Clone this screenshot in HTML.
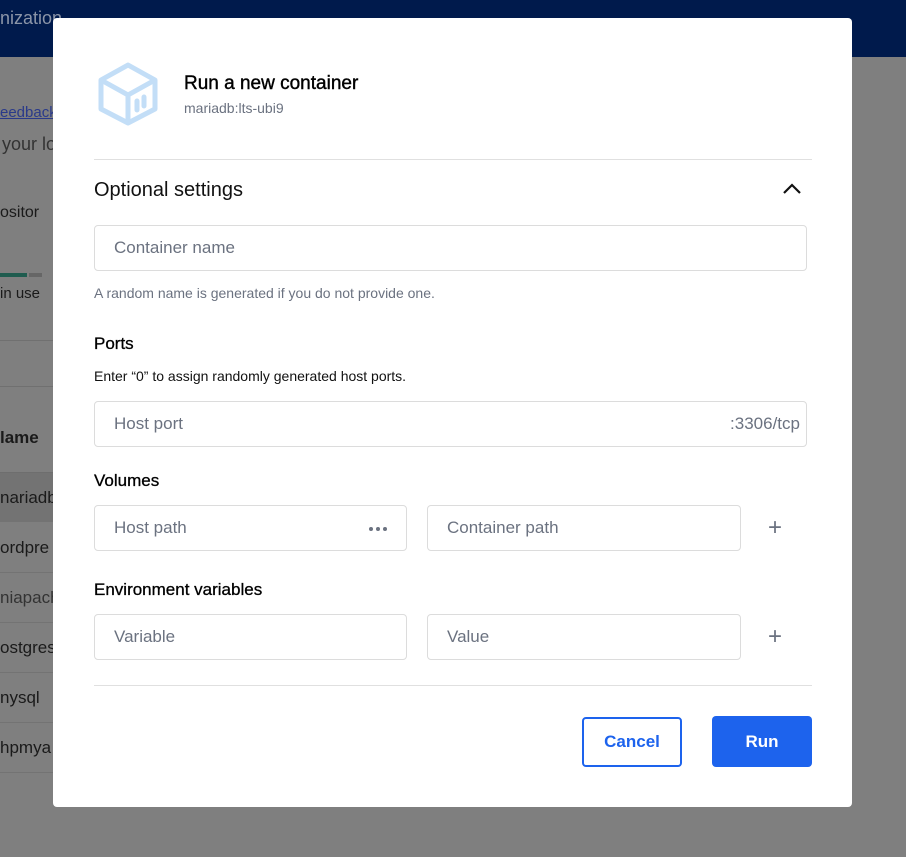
<!DOCTYPE html>
<html><head><meta charset="utf-8"><style>
*{box-sizing:border-box;margin:0;padding:0}
body{width:906px;height:857px;overflow:hidden;font-family:"Liberation Sans",Roboto,sans-serif;background:#7f7f7f;position:relative}
.bg{position:absolute;color:#1a1a1a}
.top{position:absolute;left:0;top:0;width:906px;height:57px;background:#001a4c}
.modal{position:absolute;left:53px;top:18px;width:799px;height:789px;background:#fff;border-radius:4px}
.a{position:absolute}
.inp{position:absolute;border:1px solid #dcdcdc;border-radius:4px;height:46px;font-size:17px;color:#6b7280;padding:12px 19px;line-height:20px}
.lbl{position:absolute;font-size:17px;color:#000;-webkit-text-stroke:0.3px #000}
.plus{position:absolute;font-size:24px;color:#6b7280;line-height:24px}
.dot{position:absolute;width:4px;height:4px;border-radius:2px;background:#6b7280;top:21px}
</style></head><body>
<div class="top"><span class="a" style="left:0;top:8px;color:#8b95a8;font-size:18px">nization</span></div>
<div class="bg" style="left:0;top:104px;font-size:15px;color:#2a3a8a;text-decoration:underline">eedback</div>
<div class="bg" style="left:2px;top:134px;font-size:18px;color:#333">your lo</div>
<div class="bg" style="left:0;top:204px;font-size:16px">ositor</div>
<div class="a" style="left:0;top:273px;width:27px;height:4px;background:#1f5c4f"></div>
<div class="a" style="left:29px;top:273px;width:13px;height:4px;background:#666"></div>
<div class="bg" style="left:0;top:285px;font-size:15px">in use</div>
<div class="a" style="left:0;top:340px;width:53px;height:1px;background:#707070"></div>
<div class="a" style="left:0;top:386px;width:53px;height:1px;background:#707070"></div>
<div class="bg" style="left:0;top:428px;font-size:17px;font-weight:bold">lame</div>
<div class="a" style="left:0;top:472px;width:53px;height:50px;background:#737373;border-top:1px solid #6e6e6e"></div>
<div class="bg" style="left:0;top:488px;font-size:17px">nariadb</div>
<div class="a" style="left:0;top:572px;width:53px;height:1px;background:#737373"></div>
<div class="a" style="left:0;top:622px;width:53px;height:1px;background:#737373"></div>
<div class="a" style="left:0;top:672px;width:53px;height:1px;background:#737373"></div>
<div class="a" style="left:0;top:722px;width:53px;height:1px;background:#737373"></div>
<div class="a" style="left:0;top:772px;width:53px;height:1px;background:#737373"></div>
<div class="bg" style="left:0;top:538px;font-size:17px">ordpre</div>
<div class="bg" style="left:0;top:588px;font-size:17px;color:#333">niapach</div>
<div class="bg" style="left:0;top:638px;font-size:17px">ostgres</div>
<div class="bg" style="left:0;top:688px;font-size:17px">nysql</div>
<div class="bg" style="left:0;top:738px;font-size:17px">hpmya</div>

<div class="modal">
<svg class="a" style="left:44px;top:44px" width="62" height="64" viewBox="0 0 62 64" fill="none" stroke="#c3def7" stroke-width="5" stroke-linejoin="round">
<path d="M31 3 L58 18 L58 47 L31 61 L4 47 L4 18 Z"/><path d="M4 18 L31 33 L58 18 M31 33 L31 61"/>
<path d="M40 39 v9 M47 35 v9" stroke-linecap="round"/></svg>
<div class="a" style="left:131px;top:55px;font-size:19px;color:#000;-webkit-text-stroke:0.4px #000">Run a new container</div>
<div class="a" style="left:131px;top:82px;font-size:14px;color:#6b7280">mariadb:lts-ubi9</div>
<div class="a" style="left:41px;top:141px;width:718px;height:1px;background:#e0e0e0"></div>
<div class="a" style="left:41px;top:161px;font-size:20px;color:#111">Optional settings</div>
<svg class="a" style="left:729px;top:164px" width="20" height="14"><path d="M2 11 L10 3 L18 11" stroke="#111" stroke-width="2.2" fill="none"/></svg>
<div class="inp" style="left:41px;top:207px;width:713px">Container name</div>
<div class="a" style="left:41px;top:267px;font-size:14px;color:#6b7280">A random name is generated if you do not provide one.</div>
<div class="lbl" style="left:41px;top:316px">Ports</div>
<div class="a" style="left:41px;top:350px;font-size:14px;color:#111">Enter “0” to assign randomly generated host ports.</div>
<div class="inp" style="left:41px;top:383px;width:713px">Host port<span style="position:absolute;right:6px;top:12px">:3306/tcp</span></div>
<div class="lbl" style="left:41px;top:453px">Volumes</div>
<div class="inp" style="left:41px;top:487px;width:313px">Host path<span class="dot" style="right:33px"></span><span class="dot" style="right:26px"></span><span class="dot" style="right:19px"></span></div>
<div class="inp" style="left:374px;top:487px;width:314px">Container path</div>
<div class="plus" style="left:715px;top:498px">+</div>
<div class="lbl" style="left:41px;top:562px">Environment variables</div>
<div class="inp" style="left:41px;top:596px;width:313px">Variable</div>
<div class="inp" style="left:374px;top:596px;width:314px">Value</div>
<div class="plus" style="left:715px;top:607px">+</div>
<div class="a" style="left:41px;top:667px;width:718px;height:1px;background:#e0e0e0"></div>
<div class="a" style="left:529px;top:699px;width:100px;height:50px;border:2px solid #1d63ed;border-radius:4px;color:#1d63ed;font-size:17px;font-weight:bold;text-align:center;line-height:46px">Cancel</div>
<div class="a" style="left:659px;top:698px;width:100px;height:51px;background:#1d63ed;border-radius:4px;color:#fff;font-size:17px;font-weight:bold;text-align:center;line-height:51px">Run</div>
</div>
</body></html>
